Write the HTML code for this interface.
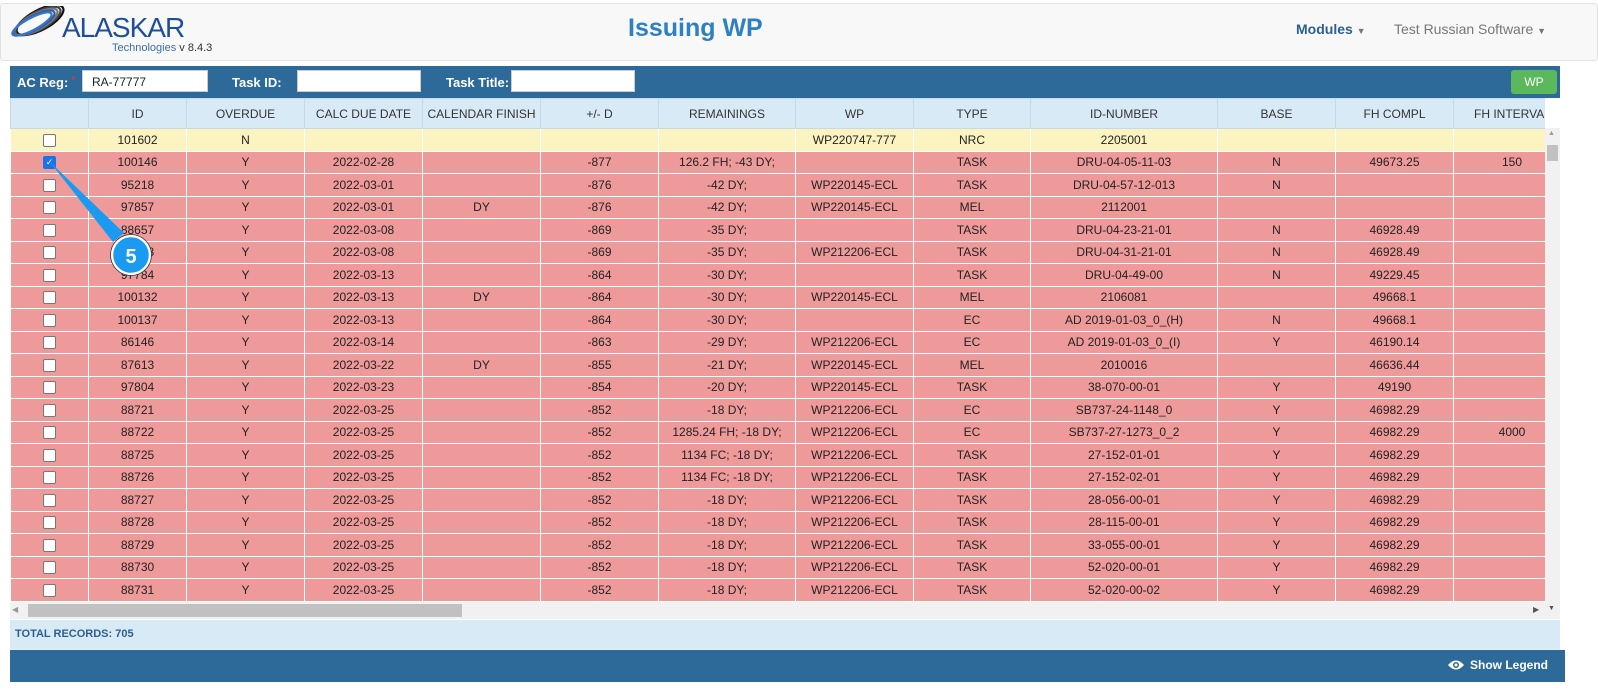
<!DOCTYPE html>
<html><head><meta charset="utf-8"><style>
body{margin:0;width:1598px;height:694px;background:#fff;font-family:"Liberation Sans",Arial,sans-serif;position:relative;overflow:hidden}
.hdr{position:absolute;left:0;top:3px;width:1596px;height:56px;background:#f8f8f8;border:1px solid #e3e3e3;border-radius:3px}
.title{position:absolute;left:628px;top:14px;font-size:25px;font-weight:bold;color:#2f80c3}
.nav{position:absolute;top:21px;font-size:14px}
.tb{position:absolute;left:10px;top:66px;width:1550px;height:32px;background:#2d6a9a}
.tb span{position:absolute;top:9px;color:#fff;font-weight:bold;font-size:13px}
.inp{position:absolute;top:4px;height:22px;background:#fff;border:1px solid #ccc;box-sizing:border-box}
.wrap{position:absolute;left:10px;top:98px;width:1535px;height:504px;overflow:hidden}
table{border-collapse:collapse;table-layout:fixed;font-size:12px;color:#222}
td,th{border:1px solid #fff;text-align:center;height:21.5px;padding:0;white-space:nowrap;overflow:hidden}
th{background:#d9eaf7;font-weight:normal;height:29px;border-color:#c5d9ea;color:#333}
tr.r td{background:#ef9a9a}
tr.y td{background:#fbf3c0}
.cb{display:inline-block;width:11px;height:11px;border:1px solid #777;border-radius:2px;background:#fff;vertical-align:middle}
.cb.on{background:#1a73e8;border-color:#1a73e8;color:#fff;font-size:9px;line-height:11px}
</style></head><body>
<div class="hdr"></div>
<svg style="position:absolute;left:8px;top:6px" width="60" height="34" viewBox="0 0 60 34">
<g fill="none" stroke-width="2.2">
<ellipse cx="32" cy="14" rx="26" ry="10" transform="rotate(-28 32 14)" stroke="#111"/>
<ellipse cx="30" cy="15" rx="25" ry="9" transform="rotate(-28 30 15)" stroke="#444"/>
<ellipse cx="28" cy="16" rx="24" ry="8" transform="rotate(-28 28 16)" stroke="#777"/>
<ellipse cx="26" cy="17" rx="23" ry="7" transform="rotate(-28 26 17)" stroke="#2c5ea8"/>
<ellipse cx="24" cy="18" rx="22" ry="6" transform="rotate(-28 24 18)" stroke="#3a74c8"/>
</g></svg>
<div style="position:absolute;left:62px;top:12px;font-size:28px;color:#1f4f9a;letter-spacing:-1px">ALASKAR</div>
<div style="position:absolute;left:112px;top:42px;font-size:11px;color:#3a6ea8">Technologies <span style="color:#333">v 8.4.3</span></div>
<div class="title">Issuing WP</div>
<div class="nav" style="left:1296px;color:#2d5f8e;font-weight:bold">Modules <span style="font-size:9px;color:#777">▼</span></div>
<div class="nav" style="left:1394px;color:#777">Test Russian Software <span style="font-size:9px">▼</span></div>
<div class="tb">
<span style="left:7px">AC Reg: <b style="color:#e33;font-size:9px;vertical-align:top">*</b></span>
<div class="inp" style="left:72px;width:126px;font-size:12px;padding:4px 9px;color:#222">RA-77777<span style="position:absolute;right:10px;top:2px;font-size:12px">⌄</span></div>
<span style="left:222px">Task ID:</span><div class="inp" style="left:287px;width:124px"></div>
<span style="left:436px">Task Title:</span><div class="inp" style="left:501px;width:124px"></div>
<div style="position:absolute;left:1501px;top:4px;width:46px;height:24px;background:#5cb85c;border-radius:3px;color:#fff;font-size:12px;text-align:center;line-height:24px">WP</div>
</div>
<div class="wrap"><table style="width:1560px">
<colgroup><col style="width:78px"><col style="width:98px"><col style="width:118px"><col style="width:118px"><col style="width:118px"><col style="width:118px"><col style="width:137px"><col style="width:118px"><col style="width:117px"><col style="width:187px"><col style="width:118px"><col style="width:118px"><col style="width:117px"></colgroup>
<tr><th></th><th>ID</th><th>OVERDUE</th><th>CALC DUE DATE</th><th>CALENDAR FINISH</th><th>+/- D</th><th>REMAININGS</th><th>WP</th><th>TYPE</th><th>ID-NUMBER</th><th>BASE</th><th>FH COMPL</th><th style="text-align:left;padding-left:20px">FH INTERVAL</th></tr>
<tr class="y"><td><span class="cb"></span></td><td>101602</td><td>N</td><td></td><td></td><td></td><td></td><td>WP220747-777</td><td>NRC</td><td>2205001</td><td></td><td></td><td></td></tr>
<tr class="r"><td><span class="cb on">✓</span></td><td>100146</td><td>Y</td><td>2022-02-28</td><td></td><td>-877</td><td>126.2 FH; -43 DY;</td><td></td><td>TASK</td><td>DRU-04-05-11-03</td><td>N</td><td>49673.25</td><td>150</td></tr>
<tr class="r"><td><span class="cb"></span></td><td>95218</td><td>Y</td><td>2022-03-01</td><td></td><td>-876</td><td>-42 DY;</td><td>WP220145-ECL</td><td>TASK</td><td>DRU-04-57-12-013</td><td>N</td><td></td><td></td></tr>
<tr class="r"><td><span class="cb"></span></td><td>97857</td><td>Y</td><td>2022-03-01</td><td>DY</td><td>-876</td><td>-42 DY;</td><td>WP220145-ECL</td><td>MEL</td><td>2112001</td><td></td><td></td><td></td></tr>
<tr class="r"><td><span class="cb"></span></td><td>88657</td><td>Y</td><td>2022-03-08</td><td></td><td>-869</td><td>-35 DY;</td><td></td><td>TASK</td><td>DRU-04-23-21-01</td><td>N</td><td>46928.49</td><td></td></tr>
<tr class="r"><td><span class="cb"></span></td><td>88658</td><td>Y</td><td>2022-03-08</td><td></td><td>-869</td><td>-35 DY;</td><td>WP212206-ECL</td><td>TASK</td><td>DRU-04-31-21-01</td><td>N</td><td>46928.49</td><td></td></tr>
<tr class="r"><td><span class="cb"></span></td><td>97784</td><td>Y</td><td>2022-03-13</td><td></td><td>-864</td><td>-30 DY;</td><td></td><td>TASK</td><td>DRU-04-49-00</td><td>N</td><td>49229.45</td><td></td></tr>
<tr class="r"><td><span class="cb"></span></td><td>100132</td><td>Y</td><td>2022-03-13</td><td>DY</td><td>-864</td><td>-30 DY;</td><td>WP220145-ECL</td><td>MEL</td><td>2106081</td><td></td><td>49668.1</td><td></td></tr>
<tr class="r"><td><span class="cb"></span></td><td>100137</td><td>Y</td><td>2022-03-13</td><td></td><td>-864</td><td>-30 DY;</td><td></td><td>EC</td><td>AD 2019-01-03_0_(H)</td><td>N</td><td>49668.1</td><td></td></tr>
<tr class="r"><td><span class="cb"></span></td><td>86146</td><td>Y</td><td>2022-03-14</td><td></td><td>-863</td><td>-29 DY;</td><td>WP212206-ECL</td><td>EC</td><td>AD 2019-01-03_0_(I)</td><td>Y</td><td>46190.14</td><td></td></tr>
<tr class="r"><td><span class="cb"></span></td><td>87613</td><td>Y</td><td>2022-03-22</td><td>DY</td><td>-855</td><td>-21 DY;</td><td>WP220145-ECL</td><td>MEL</td><td>2010016</td><td></td><td>46636.44</td><td></td></tr>
<tr class="r"><td><span class="cb"></span></td><td>97804</td><td>Y</td><td>2022-03-23</td><td></td><td>-854</td><td>-20 DY;</td><td>WP220145-ECL</td><td>TASK</td><td>38-070-00-01</td><td>Y</td><td>49190</td><td></td></tr>
<tr class="r"><td><span class="cb"></span></td><td>88721</td><td>Y</td><td>2022-03-25</td><td></td><td>-852</td><td>-18 DY;</td><td>WP212206-ECL</td><td>EC</td><td>SB737-24-1148_0</td><td>Y</td><td>46982.29</td><td></td></tr>
<tr class="r"><td><span class="cb"></span></td><td>88722</td><td>Y</td><td>2022-03-25</td><td></td><td>-852</td><td>1285.24 FH; -18 DY;</td><td>WP212206-ECL</td><td>EC</td><td>SB737-27-1273_0_2</td><td>Y</td><td>46982.29</td><td>4000</td></tr>
<tr class="r"><td><span class="cb"></span></td><td>88725</td><td>Y</td><td>2022-03-25</td><td></td><td>-852</td><td>1134 FC; -18 DY;</td><td>WP212206-ECL</td><td>TASK</td><td>27-152-01-01</td><td>Y</td><td>46982.29</td><td></td></tr>
<tr class="r"><td><span class="cb"></span></td><td>88726</td><td>Y</td><td>2022-03-25</td><td></td><td>-852</td><td>1134 FC; -18 DY;</td><td>WP212206-ECL</td><td>TASK</td><td>27-152-02-01</td><td>Y</td><td>46982.29</td><td></td></tr>
<tr class="r"><td><span class="cb"></span></td><td>88727</td><td>Y</td><td>2022-03-25</td><td></td><td>-852</td><td>-18 DY;</td><td>WP212206-ECL</td><td>TASK</td><td>28-056-00-01</td><td>Y</td><td>46982.29</td><td></td></tr>
<tr class="r"><td><span class="cb"></span></td><td>88728</td><td>Y</td><td>2022-03-25</td><td></td><td>-852</td><td>-18 DY;</td><td>WP212206-ECL</td><td>TASK</td><td>28-115-00-01</td><td>Y</td><td>46982.29</td><td></td></tr>
<tr class="r"><td><span class="cb"></span></td><td>88729</td><td>Y</td><td>2022-03-25</td><td></td><td>-852</td><td>-18 DY;</td><td>WP212206-ECL</td><td>TASK</td><td>33-055-00-01</td><td>Y</td><td>46982.29</td><td></td></tr>
<tr class="r"><td><span class="cb"></span></td><td>88730</td><td>Y</td><td>2022-03-25</td><td></td><td>-852</td><td>-18 DY;</td><td>WP212206-ECL</td><td>TASK</td><td>52-020-00-01</td><td>Y</td><td>46982.29</td><td></td></tr>
<tr class="r"><td><span class="cb"></span></td><td>88731</td><td>Y</td><td>2022-03-25</td><td></td><td>-852</td><td>-18 DY;</td><td>WP212206-ECL</td><td>TASK</td><td>52-020-00-02</td><td>Y</td><td>46982.29</td><td></td></tr>
<tr class="r"><td></td><td></td><td></td><td></td><td></td><td></td><td></td><td></td><td></td><td></td><td></td><td></td><td></td></tr>
</table></div>
<div style="position:absolute;left:1545px;top:128px;width:15px;height:474px;background:#f1f1f1"></div>
<div style="position:absolute;left:1547px;top:145px;width:11px;height:16px;background:#c1c1c1"></div>
<div style="position:absolute;left:1548px;top:130px;font-size:7px;color:#999">▲</div>
<div style="position:absolute;left:10px;top:602px;width:1550px;height:17px;background:#f1f1f1"></div>
<div style="position:absolute;left:28px;top:604px;width:434px;height:13px;background:#c1c1c1"></div>
<div style="position:absolute;left:12px;top:605px;font-size:8px;color:#999">◀</div>
<div style="position:absolute;left:1533px;top:605px;font-size:8px;color:#555">▶</div>
<div style="position:absolute;left:1548px;top:605px;font-size:7px;color:#555">▼</div>
<div style="position:absolute;left:10px;top:620px;width:1550px;height:29px;background:#d9eaf7;border-bottom:1px solid #e8eef3"></div>
<div style="position:absolute;left:15px;top:628px;font-size:11px;color:#2d5f8e;font-weight:bold">TOTAL RECORDS: 705</div>
<div style="position:absolute;left:10px;top:650px;width:1555px;height:32px;background:#2d6a9a"></div>
<svg style="position:absolute;left:1447px;top:659px" width="18" height="12" viewBox="0 0 18 12"><path d="M1 6Q9 -3 17 6Q9 15 1 6Z" fill="#fff"/><circle cx="9" cy="6" r="3" fill="#2d6a9a"/><circle cx="9" cy="6" r="1.5" fill="#fff"/></svg>
<div style="position:absolute;left:1470px;top:658px;font-size:12px;color:#fff;font-weight:bold">Show Legend</div>
<svg style="position:absolute;left:0;top:0" width="200" height="300">
<polygon points="49,161 113,242 124,233" fill="#1a9af0"/>
<circle cx="131" cy="255" r="19" fill="#1a9af0" stroke="#fff" stroke-width="2.5"/>
<circle cx="131" cy="255" r="20.5" fill="none" stroke="#333" stroke-width="0.8"/>
<text x="131" y="263" font-family="Liberation Sans" font-weight="bold" font-size="20" fill="#fff" text-anchor="middle">5</text>
</svg>
</body></html>
